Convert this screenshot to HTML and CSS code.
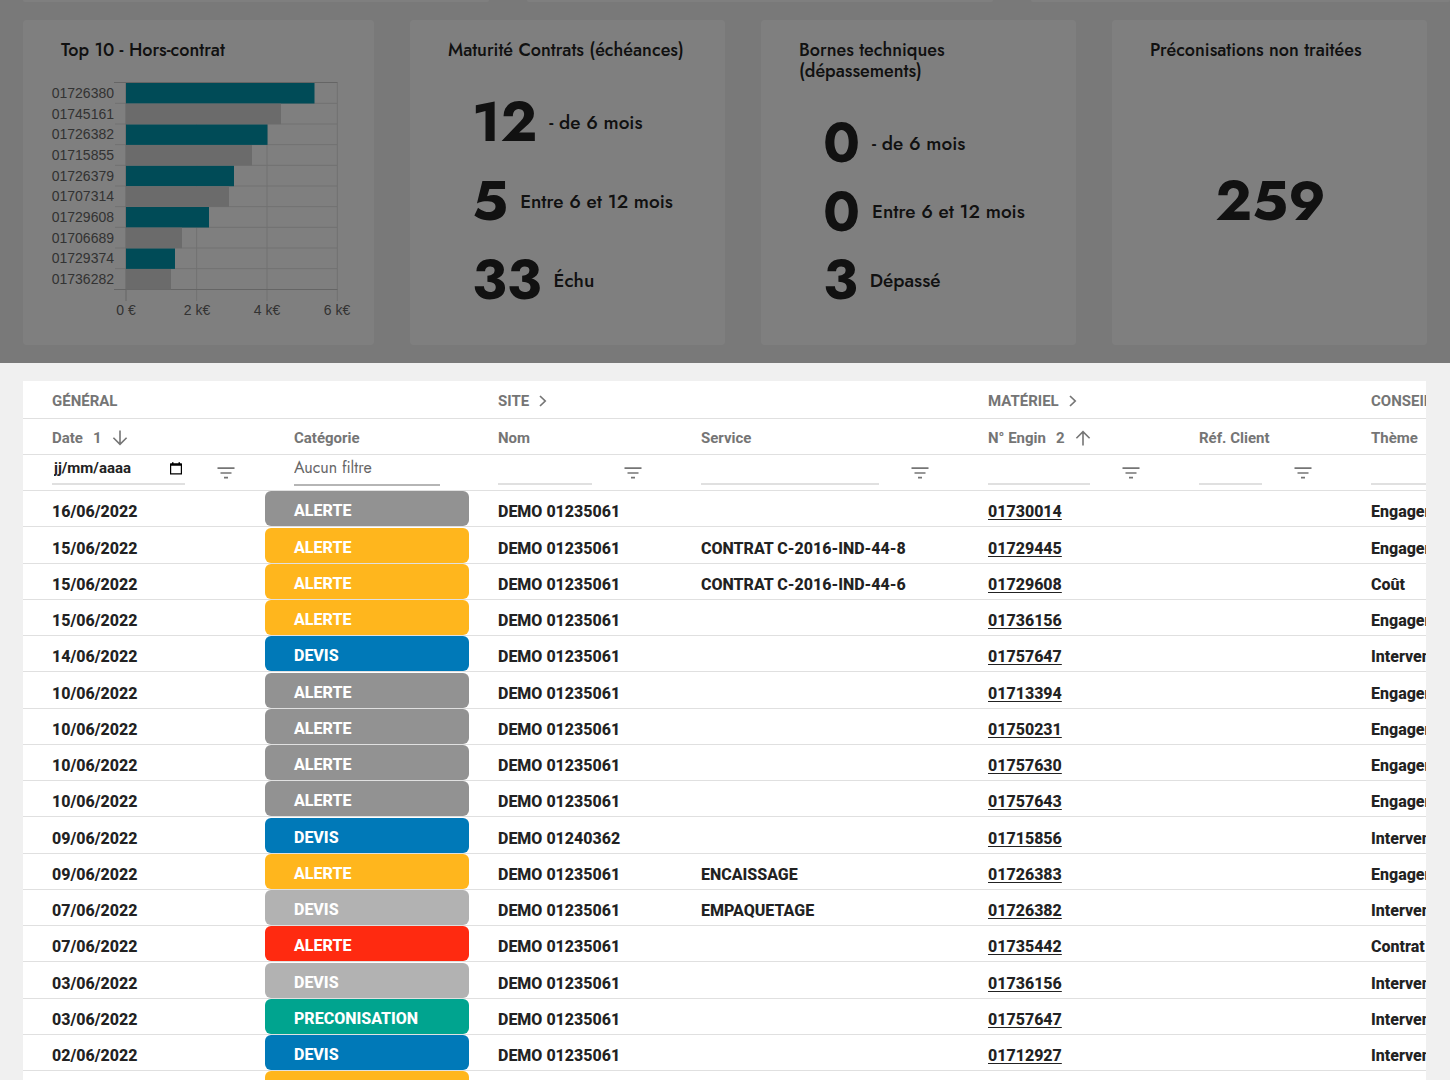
FILE: index.html
```html
<!DOCTYPE html>
<html lang="fr">
<head>
<meta charset="utf-8">
<meta name="viewport" content="width=device-width, initial-scale=1">
<title>Tableau de bord</title>
<link rel="stylesheet" href="styles.css">
</head>
<body>
<svg class="sprite" aria-hidden="true">
  <symbol id="filter" viewBox="0 0 18 12"><path d="M.5 1.2h17M3.5 6h11M7 10.6h4" stroke="currentColor" stroke-width="1.7" fill="none"/></symbol>
  <symbol id="down" viewBox="0 0 16 16"><path d="M8 .5v13.6M1.4 7.7 8 14.3l6.600-6.600" stroke="currentColor" stroke-width="1.600" fill="none"/></symbol>
  <symbol id="up" viewBox="0 0 16 16"><path d="M8 15.500V1.900M1.400 8.300 8 1.700l6.600 6.600" stroke="currentColor" stroke-width="1.600" fill="none"/></symbol>
  <symbol id="chevron" viewBox="0 0 8 12"><path d="M1 1l5.200 5L1 11" stroke="currentColor" stroke-width="1.700" fill="none"/></symbol>
  <symbol id="calendar" viewBox="0 0 12 13"><path d="M.6 2.200h10.800v9.700H.6z" stroke="currentColor" stroke-width="1.200" fill="none"/><path d="M.5 1.500h11v2.200H.5zM2 .3h1.500v1.500H2zM8.500.3H10v1.500H8.500z" fill="currentColor"/></symbol>
</svg>
<main class="page">
  <section class="summary">
    <div class="cards cards-previous">
      <div class="card-edge"></div><div class="card-edge"></div><div class="card-edge"></div>
    </div>
    <div class="cards cards-main">
      <article class="card card-chart">
        <h2 class="card-title">Top 10 - Hors-contrat</h2>
        <svg class="chart" viewBox="0 0 320 245" role="img" aria-label="Top 10 - Hors-contrat">
          <g class="grid">
            <path d="M74 27.300H296M74 48H296M74 68.700H296M74 89.300H296M74 110H296M74 130.700H296M74 151.300H296M74 172H296M74 192.700H296"/>
            <path d="M155.700 6.500V225M226 6.500V225M296.300 6.500V225"/>
          </g>
          <path class="axis" d="M73 6.500H296.500M73 213.500H296.500M85 6.500V225"/>
          <g class="bar-main">
            <rect x="85" y="7" width="188.500" height="20.500"/>
            <rect x="85" y="48.400" width="141.500" height="20.500"/>
            <rect x="85" y="89.700" width="108" height="20.500"/>
            <rect x="85" y="131" width="83" height="20.500"/>
            <rect x="85" y="172.400" width="49" height="20.500"/>
          </g>
          <g class="bar-alt">
            <rect x="85" y="27.700" width="155" height="20.500"/>
            <rect x="85" y="69" width="126" height="20.500"/>
            <rect x="85" y="110.400" width="103" height="20.500"/>
            <rect x="85" y="151.700" width="56" height="20.500"/>
            <rect x="85" y="193" width="45" height="20.500"/>
          </g>
          <g class="chart-labels" text-anchor="end">
            <text x="73" y="22">01726380</text><text x="73" y="43">01745161</text>
            <text x="73" y="63">01726382</text><text x="73" y="84">01715855</text>
            <text x="73" y="105">01726379</text><text x="73" y="125">01707314</text>
            <text x="73" y="146">01729608</text><text x="73" y="167">01706689</text>
            <text x="73" y="187">01729374</text><text x="73" y="208">01736282</text>
          </g>
          <g class="chart-labels" text-anchor="middle">
            <text x="85" y="239">0 €</text><text x="156" y="239">2 k€</text>
            <text x="226" y="239">4 k€</text><text x="296" y="239">6 k€</text>
          </g>
        </svg>
      </article>
      <article class="card">
        <h2 class="card-title">Maturité Contrats (échéances)</h2>
        <ul class="stats">
          <li><strong>12</strong><span>- de 6 mois</span></li>
          <li><strong>5</strong><span>Entre 6 et 12 mois</span></li>
          <li><strong>33</strong><span>Échu</span></li>
        </ul>
      </article>
      <article class="card">
        <h2 class="card-title">Bornes techniques (dépassements)</h2>
        <ul class="stats">
          <li><strong>0</strong><span>- de 6 mois</span></li>
          <li><strong>0</strong><span>Entre 6 et 12 mois</span></li>
          <li><strong>3</strong><span>Dépassé</span></li>
        </ul>
      </article>
      <article class="card">
        <h2 class="card-title">Préconisations non traitées</h2>
        <p class="total">259</p>
      </article>
    </div>
    <div class="overlay"></div>
  </section>

  <section class="panel">
    <table class="data">
      <colgroup><col class="c-date"><col class="c-cat"><col class="c-name"><col class="c-service"><col class="c-engine"><col class="c-ref"><col class="c-theme"></colgroup>
      <thead>
        <tr>
          <th colspan="2">GÉNÉRAL</th>
          <th colspan="2"><button class="head-btn" type="button">SITE <svg class="chevron"><use href="#chevron"/></svg></button></th>
          <th colspan="2"><button class="head-btn" type="button">MATÉRIEL <svg class="chevron"><use href="#chevron"/></svg></button></th>
          <th>CONSEIL</th>
        </tr>
        <tr>
          <th><button class="head-btn" type="button">Date <span>1</span> <svg class="arrow"><use href="#down"/></svg></button></th>
          <th>Catégorie</th><th>Nom</th><th>Service</th>
          <th><button class="head-btn" type="button">N° Engin <span>2</span> <svg class="arrow"><use href="#up"/></svg></button></th>
          <th>Réf. Client</th><th>Thème</th>
        </tr>
        <tr class="filters">
          <td><div class="filter"><div class="field"><input type="text" placeholder="jj/mm/aaaa" aria-label="Filtrer par date"><button class="icon-btn calendar" type="button" aria-label="Calendrier"><svg><use href="#calendar"/></svg></button></div><button class="icon-btn" type="button" aria-label="Options de filtre"><svg><use href="#filter"/></svg></button></div></td>
          <td><div class="filter filter-select"><select aria-label="Filtrer par catégorie"><option>Aucun filtre</option></select></div></td>
          <td><div class="filter"><div class="field"><input type="text" aria-label="Filtrer par nom"></div><button class="icon-btn" type="button" aria-label="Options de filtre"><svg><use href="#filter"/></svg></button></div></td>
          <td><div class="filter"><div class="field"><input type="text" aria-label="Filtrer par service"></div><button class="icon-btn" type="button" aria-label="Options de filtre"><svg><use href="#filter"/></svg></button></div></td>
          <td><div class="filter"><div class="field"><input type="text" aria-label="Filtrer par numéro d'engin"></div><button class="icon-btn" type="button" aria-label="Options de filtre"><svg><use href="#filter"/></svg></button></div></td>
          <td><div class="filter"><div class="field"><input type="text" aria-label="Filtrer par référence client"></div><button class="icon-btn" type="button" aria-label="Options de filtre"><svg><use href="#filter"/></svg></button></div></td>
          <td><div class="filter"><div class="field"><input type="text" aria-label="Filtrer par thème"></div></div></td>
        </tr>
      </thead>
      <tbody>
        <tr><td>16/06/2022</td><td class="cat"><span class="tag gray">ALERTE</span></td><td>DEMO 01235061</td><td></td><td><a href="#">01730014</a></td><td></td><td>Engagement</td></tr>
        <tr><td>15/06/2022</td><td class="cat"><span class="tag amber">ALERTE</span></td><td>DEMO 01235061</td><td>CONTRAT C-2016-IND-44-8</td><td><a href="#">01729445</a></td><td></td><td>Engagement</td></tr>
        <tr><td>15/06/2022</td><td class="cat"><span class="tag amber">ALERTE</span></td><td>DEMO 01235061</td><td>CONTRAT C-2016-IND-44-6</td><td><a href="#">01729608</a></td><td></td><td>Coût</td></tr>
        <tr><td>15/06/2022</td><td class="cat"><span class="tag amber">ALERTE</span></td><td>DEMO 01235061</td><td></td><td><a href="#">01736156</a></td><td></td><td>Engagement</td></tr>
        <tr><td>14/06/2022</td><td class="cat"><span class="tag blue">DEVIS</span></td><td>DEMO 01235061</td><td></td><td><a href="#">01757647</a></td><td></td><td>Intervention</td></tr>
        <tr><td>10/06/2022</td><td class="cat"><span class="tag gray">ALERTE</span></td><td>DEMO 01235061</td><td></td><td><a href="#">01713394</a></td><td></td><td>Engagement</td></tr>
        <tr><td>10/06/2022</td><td class="cat"><span class="tag gray">ALERTE</span></td><td>DEMO 01235061</td><td></td><td><a href="#">01750231</a></td><td></td><td>Engagement</td></tr>
        <tr><td>10/06/2022</td><td class="cat"><span class="tag gray">ALERTE</span></td><td>DEMO 01235061</td><td></td><td><a href="#">01757630</a></td><td></td><td>Engagement</td></tr>
        <tr><td>10/06/2022</td><td class="cat"><span class="tag gray">ALERTE</span></td><td>DEMO 01235061</td><td></td><td><a href="#">01757643</a></td><td></td><td>Engagement</td></tr>
        <tr><td>09/06/2022</td><td class="cat"><span class="tag blue">DEVIS</span></td><td>DEMO 01240362</td><td></td><td><a href="#">01715856</a></td><td></td><td>Intervention</td></tr>
        <tr><td>09/06/2022</td><td class="cat"><span class="tag amber">ALERTE</span></td><td>DEMO 01235061</td><td>ENCAISSAGE</td><td><a href="#">01726383</a></td><td></td><td>Engagement</td></tr>
        <tr><td>07/06/2022</td><td class="cat"><span class="tag silver">DEVIS</span></td><td>DEMO 01235061</td><td>EMPAQUETAGE</td><td><a href="#">01726382</a></td><td></td><td>Intervention</td></tr>
        <tr><td>07/06/2022</td><td class="cat"><span class="tag red">ALERTE</span></td><td>DEMO 01235061</td><td></td><td><a href="#">01735442</a></td><td></td><td>Contrat</td></tr>
        <tr><td>03/06/2022</td><td class="cat"><span class="tag silver">DEVIS</span></td><td>DEMO 01235061</td><td></td><td><a href="#">01736156</a></td><td></td><td>Intervention</td></tr>
        <tr><td>03/06/2022</td><td class="cat"><span class="tag green">PRECONISATION</span></td><td>DEMO 01235061</td><td></td><td><a href="#">01757647</a></td><td></td><td>Intervention</td></tr>
        <tr><td>02/06/2022</td><td class="cat"><span class="tag blue">DEVIS</span></td><td>DEMO 01235061</td><td></td><td><a href="#">01712927</a></td><td></td><td>Intervention</td></tr>
        <tr><td></td><td class="cat"><span class="tag amber"></span></td><td></td><td></td><td></td><td></td><td></td></tr>
      </tbody>
    </table>
  </section>
</main>
</body>
</html>
```
FILE: styles.css
```css
* { box-sizing: border-box; }

body {
  margin: 0;
  background: #f0f0f0;
  color: #222;
  font-family: Roboto, "Liberation Sans", sans-serif;
}

.sprite { position: absolute; width: 0; height: 0; }

.page {
  display: flex;
  flex-direction: column;
  gap: 18px;
  height: 100vh;
  overflow: hidden;
}

/* Summary cards */
.summary {
  position: relative;
  flex: none;
  display: flex;
  flex-direction: column;
  gap: 18px;
  padding: 0 23px 18px;
  background: #f2f2f2;
  font-family: Jost, Lato, sans-serif;
}

.overlay {
  position: absolute;
  inset: 0;
  background: rgba(0, 0, 0, 0.5);
}

.cards { display: grid; }

.cards-previous {
  grid-template-columns: 10fr 10fr 9fr;
  gap: 38px;
  margin-right: -23px;
}

.card-edge {
  height: 2px;
  background: #fff;
  border-radius: 0 0 2px 2px;
}

.cards-main {
  grid-template-columns: 10fr 9fr 9fr 9fr;
  gap: 36px;
}

.card {
  display: flex;
  flex-direction: column;
  min-height: 325px;
  padding: 20px 36px 41px 38px;
  background: #fff;
  border-radius: 4px;
}

.card-title {
  margin: 0 0 37px;
  font-size: 18px;
  font-weight: 500;
  line-height: 21px;
}

.card-chart { padding: 20px 13px 24px 18px; }
.card-chart .card-title { margin: 0 0 15px; padding-left: 20px; }

.chart { display: block; width: 320px; height: 245px; }
.grid { stroke: #e2e2e2; stroke-width: 1; fill: none; }
.axis { stroke: #cacaca; stroke-width: 1; fill: none; }
.bar-main { fill: #0096ae; }
.bar-alt { fill: #d6d6d6; }
.chart-labels {
  fill: #666;
  font: 14px "Liberation Sans", sans-serif;
}

.stats {
  flex: 1;
  display: flex;
  flex-direction: column;
  justify-content: space-between;
  margin: 0;
  padding: 0 0 0 24px;
  list-style: none;
}

.stats li {
  display: flex;
  align-items: center;
  gap: 12px;
  height: 48px;
  font-size: 19px;
  font-weight: 500;
  white-space: nowrap;
}

.stats strong,
.total {
  font-size: 56px;
  font-weight: 700;
  line-height: 48px;
}

.total {
  flex: 1;
  display: flex;
  align-items: center;
  justify-content: center;
  margin: 0;
}

/* Data table */
.panel {
  flex: 1;
  min-height: 0;
  margin: 0 24px 0 23px;
  overflow: hidden;
  background: #fff;
}

.data {
  width: 1520px;
  table-layout: fixed;
  border-collapse: separate;
  border-spacing: 0;
}

.c-date { width: 242px; }
.c-cat { width: 204px; }
.c-name { width: 203px; }
.c-service { width: 287px; }
.c-engine { width: 211px; }
.c-ref { width: 172px; }

th, td {
  height: 36px;
  padding: 0 0 0 29px;
  border-bottom: 1px solid #e0e0e0;
  text-align: left;
  white-space: nowrap;
}

th {
  padding-top: 2px;
  color: #757575;
  font-size: 15px;
  font-weight: 700;
}

thead tr:first-child th { height: 38px; }

.filters td { vertical-align: top; }

.head-btn {
  display: inline-flex;
  align-items: center;
  gap: 10px;
  padding: 0;
  border: 0;
  background: none;
  color: inherit;
  font: inherit;
}

.arrow { width: 16px; height: 16px; }
.chevron { width: 8px; height: 12px; }

.filter {
  display: flex;
  align-items: center;
  gap: 32px;
  height: 35px;
  padding-right: 30px;
}

.filter-select { padding-right: 29px; }

.field {
  flex: 1;
  align-self: flex-start;
  display: flex;
  min-width: 0;
  height: 30px;
  padding: 0 3px 2px 2px;
  border-bottom: 2px solid #e0e0e0;
}

.field input {
  flex: 1;
  min-width: 0;
  padding: 0;
  border: 0;
  outline: 0;
  background: none;
  color: #222;
  font: 700 15px Roboto, sans-serif;
}

.field input::placeholder { color: #222; opacity: 1; }

.filter select {
  flex: 1;
  align-self: flex-start;
  height: 31px;
  padding: 0 0 5px;
  border: 0;
  border-bottom: 2px solid #b5b5b5;
  border-radius: 0;
  appearance: none;
  background: none;
  color: #666;
  font: 16px Jost, Lato, sans-serif;
}

.icon-btn {
  flex: none;
  width: 18px;
  height: 12px;
  padding: 0;
  border: 0;
  background: none;
  color: #757575;
}

.icon-btn svg { display: block; width: 100%; height: 100%; }

.calendar {
  align-self: center;
  width: 12px;
  height: 13px;
  color: #000;
}

tbody td {
  padding-top: 6px;
  font-size: 16px;
  font-weight: 800;
}

/* Keeps the average row pitch a little above 36px */
tbody tr:nth-child(4n + 2) td { height: 37px; }

tbody a { color: inherit; text-underline-offset: 2px; }

tbody .cat { padding: 0; vertical-align: bottom; }

.tag {
  display: flex;
  align-items: center;
  height: 35px;
  padding: 3px 0 0 29px;
  border-radius: 6px;
  color: #fff;
}

.gray { background: #929292; }
.silver { background: #b2b2b2; }
.amber { background: #ffb61d; }
.blue { background: #0079b8; }
.red { background: #ff2a10; }
.green { background: #00a48f; }
```
